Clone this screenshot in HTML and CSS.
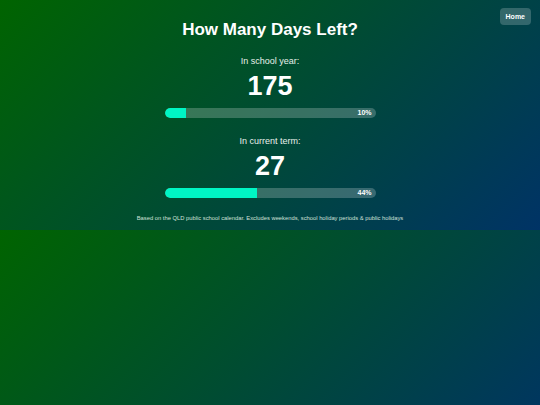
FILE: index.html
```html
<!DOCTYPE html>
<html lang="en">
<head>
  <meta charset="UTF-8">
  <meta name="viewport" content="width=device-width, initial-scale=1">
  <title>How Many Days Left?</title>
  <link rel="stylesheet" href="styles.css">
</head>
<body>

  <a class="home-btn" href="#">Home</a>

  <h1>How Many Days Left?</h1>

  <!-- School year -->
  <div class="counter">
    <p class="label">In school year:</p>
    <p class="days">175</p>
    <div class="bar">
      <div class="fill" style="width:10%"></div>
      <span class="pct">10%</span>
    </div>
  </div>

  <!-- Current term -->
  <div class="counter">
    <p class="label">In current term:</p>
    <p class="days">27</p>
    <div class="bar">
      <div class="fill" style="width:44%"></div>
      <span class="pct">44%</span>
    </div>
  </div>

  <p class="note">Based on the QLD public school calendar. Excludes weekends, school holiday periods &amp; public holidays</p>

</body>
</html>
```

FILE: styles.css
```css
* { margin:0; padding:0; box-sizing:border-box; }
body {
  background:linear-gradient(135deg, #006400, #003366);
  color:#fff;
  font-family:"Liberation Sans", Arial, sans-serif;
  text-align:center;
  padding:19px 0 9px;
}
h1 {
  font-size:17px;
  font-weight:bold;
  line-height:22px;
  margin-bottom:14px;
}
.home-btn {
  position:absolute;
  top:8px; right:9px;
  background:rgba(255,255,255,0.2);
  color:#fff;
  font-size:7px;
  font-weight:bold;
  line-height:9px;
  padding:4px 6px;
  border-radius:4px;
  text-decoration:none;
}
.counter { margin-bottom:17px; }
.counter:last-of-type { margin-bottom:0; }
.label {
  font-size:9px;
  line-height:12px;
  color:#e8f0ea;
}
.days {
  font-size:27px;
  font-weight:bold;
  line-height:32px;
  margin:3px 0 6px;
}
.bar {
  position:relative;
  width:211px;
  height:10px;
  margin:0 auto;
  background:rgba(255,255,255,0.22);
  border-radius:5px;
  overflow:hidden;
}
.fill {
  height:100%;
  background:#00f5c4;
  border-radius:5px 0 0 5px;
}
.pct {
  position:absolute;
  right:4px; top:0;
  font-size:7px;
  font-weight:bold;
  line-height:10px;
}
.note {
  font-size:5.8px;
  color:#cfe0d8;
  margin-top:17px;
}
```
